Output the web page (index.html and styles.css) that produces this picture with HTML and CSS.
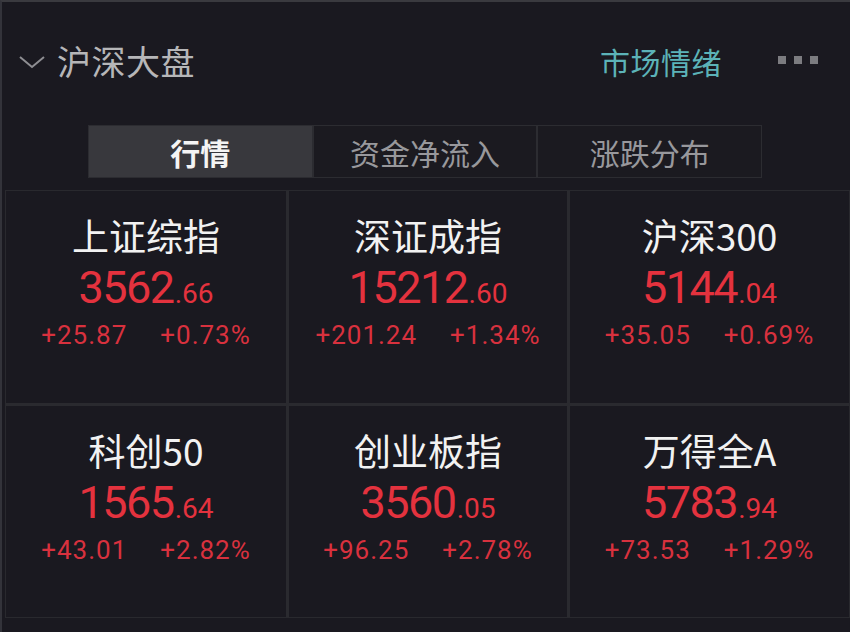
FILE: index.html
```html
<!DOCTYPE html>
<html lang="zh-CN">
<head>
<meta charset="utf-8">
<title>沪深大盘</title>
<link rel="stylesheet" href="styles.css">
</head>
<body>
<div class="screen">
  <header class="header">
    <div class="header-left">
      <svg class="chevron" width="28" height="16" viewBox="0 0 28 16"><path d="M2 3 L14 13 L26 3" fill="none" stroke="#8e8e92" stroke-width="2"/></svg>
      <span class="title">沪深大盘</span>
    </div>
    <div class="header-right">
      <span class="mood">市场情绪</span>
      <span class="dots"><i></i><i></i><i></i></span>
    </div>
  </header>

  <nav class="tabs">
    <div class="tab active">行情</div>
    <div class="tab">资金净流入</div>
    <div class="tab">涨跌分布</div>
  </nav>

  <section class="grid">
    <div class="cell">
      <div class="name">上证综指</div>
      <div class="value"><span class="int">3562</span><span class="dec">.66</span></div>
      <div class="change"><span>+25.87</span><span>+0.73%</span></div>
    </div>
    <div class="cell">
      <div class="name">深证成指</div>
      <div class="value"><span class="int">15212</span><span class="dec">.60</span></div>
      <div class="change"><span>+201.24</span><span>+1.34%</span></div>
    </div>
    <div class="cell">
      <div class="name">沪深300</div>
      <div class="value"><span class="int">5144</span><span class="dec">.04</span></div>
      <div class="change"><span>+35.05</span><span>+0.69%</span></div>
    </div>
    <div class="cell">
      <div class="name">科创50</div>
      <div class="value"><span class="int">1565</span><span class="dec">.64</span></div>
      <div class="change"><span>+43.01</span><span>+2.82%</span></div>
    </div>
    <div class="cell">
      <div class="name">创业板指</div>
      <div class="value"><span class="int">3560</span><span class="dec">.05</span></div>
      <div class="change"><span>+96.25</span><span>+2.78%</span></div>
    </div>
    <div class="cell">
      <div class="name">万得全A</div>
      <div class="value"><span class="int">5783</span><span class="dec">.94</span></div>
      <div class="change"><span>+73.53</span><span>+1.29%</span></div>
    </div>
  </section>
</div>
</body>
</html>
```
FILE: styles.css
```css
* { box-sizing: border-box; margin: 0; padding: 0; }

html, body {
  width: 850px;
  height: 632px;
  overflow: hidden;
  background: #1a1920;
}

body {
  font-family: "Noto Sans CJK SC", "Noto Sans", sans-serif;
}

.screen {
  width: 850px;
  height: 632px;
  border-top: 2px solid #3a3a3f;
  border-left: 2px solid #33333a;
  background: #1a1920;
}

.header {
  display: flex;
  align-items: center;
  justify-content: space-between;
  height: 44px;
  margin-top: 37px;
  padding: 0 32px 0 16px;
}

.header-left {
  display: flex;
  align-items: center;
  gap: 11px;
}

.chevron { display: block; margin-top: 2px; }

.title {
  font-size: 34px;
  line-height: 44px;
  color: #b6b6b8;
  letter-spacing: 0.5px;
}

.header-right {
  display: flex;
  align-items: center;
  gap: 56px;
}

.mood {
  font-size: 30px;
  line-height: 44px;
  color: #5cb3b8;
  letter-spacing: 0.5px;
}

.dots {
  display: flex;
  gap: 8px;
  margin-top: -2px;
}

.dots i {
  display: block;
  width: 8px;
  height: 8px;
  background: #7c7c80;
}

.tabs {
  display: flex;
  margin: 42px 0 0 86px;
  width: 674px;
  height: 53px;
  border: 1px solid #2c2c31;
  background: #1b1a20;
}

.tab {
  flex: 1;
  display: flex;
  align-items: center;
  justify-content: center;
  font-size: 30px;
  color: #98989c;
  border-left: 2px solid #2c2c31;
}

.tab:first-child { border-left: none; }

.tab.active {
  background: #38383d;
  color: #f4f4f4;
  font-weight: 700;
}

.grid {
  display: grid;
  grid-template-columns: 280px 278px 1fr;
  grid-template-rows: 212px 211px;
  gap: 3px;
  margin: 12px 0 0 3px;
  width: 845px;
  border: 1px solid #29292e;
  background: #2a2a2f;
}

.cell {
  display: flex;
  flex-direction: column;
  align-items: center;
  background: #1a1920;
  padding-top: 22px;
}

.name {
  font-size: 37px;
  line-height: 44px;
  color: #f2f2f2;
}

.value {
  margin-top: 6px;
  line-height: 50px;
  height: 50px;
  font-family: Roboto, "Noto Sans", sans-serif;
  color: #e4323e;
  white-space: nowrap;
}

.value .int {
  font-size: 45px;
  letter-spacing: -1.5px;
}

.value .dec {
  font-size: 28px;
  margin-left: 1px;
}

.change {
  display: flex;
  gap: 33px;
  margin-top: 7px;
  line-height: 30px;
  font-family: Roboto, "Noto Sans", sans-serif;
  font-size: 26px;
  color: #d8313e;
  letter-spacing: 1px;
}
```
